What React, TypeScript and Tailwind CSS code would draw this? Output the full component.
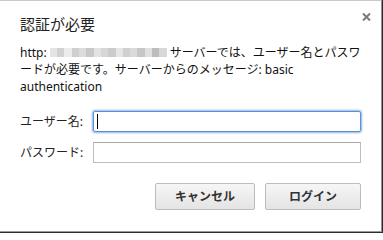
import React from "react";

const font = { fontFamily: '"Noto Sans", "Noto Sans CJK JP", sans-serif' };

function Blur() {
  const blocks = [
    "#e4e4e4", "#d2d2d2", "#ececec", "#cfcfcf", "#dcdcdc", "#c8c8c8", "#e2e2e2", "#d6d6d6",
    "#cbcbcb", "#e6e6e6", "#d0d0d0", "#dadada", "#c6c6c6", "#e0e0e0", "#bdbdbd", "#d8d8d8",
  ];
  return (
    <span className="inline-flex h-[9px] w-[117px] align-middle mx-[3px] relative top-[-1px]">
      {blocks.map((c, i) => (
        <span key={i} className="flex-1 h-full" style={{ background: c }} />
      ))}
    </span>
  );
}

export default function App() {
  return (
    <div className="w-[383px] h-[233px] bg-[#2b2b30] overflow-hidden" style={font}>
      <div className="w-[382px] h-[232px] bg-white border-t border-t-[#c9c9c9] border-r border-r-[#8f8f8f] border-b border-b-[#9a9a9a] relative text-[#222]">
        <button className="absolute right-[10px] top-[11px] w-[10px] h-[9px] flex items-center justify-center">
          <svg width="9" height="8" viewBox="0 0 9 8">
            <path d="M1 0.5 L8 7.5 M8 0.5 L1 7.5" stroke="#7a7a7a" strokeWidth="2" />
          </svg>
        </button>
        <div className="pl-[20px] pr-[20px] pt-[13px]">
          <div className="text-[15px] leading-[20px] text-[#222]">認証が必要</div>
          <div className="mt-[10px] text-[12px] leading-[17px] text-[#111]">
            <div className="whitespace-nowrap">
              http:
              <Blur />
              サーバーでは、ユーザー名とパスワ
            </div>
            <div className="whitespace-nowrap">ードが必要です。サーバーからのメッセージ: basic</div>
            <div className="whitespace-nowrap">authentication</div>
          </div>
          <div className="mt-[16px] flex flex-col gap-[10px] text-[12px]">
            <div className="flex items-center">
              <span className="w-[73px] text-[#222]">ユーザー名:</span>
              <div className="w-[269px] h-[21px] border border-[#5b90d2] rounded-[2px] shadow-[0_0_2px_1px_#8db4e4] relative">
                <span className="absolute left-[3px] top-[2px] w-px h-[15px] bg-black" />
              </div>
            </div>
            <div className="flex items-center">
              <span className="w-[73px] text-[#222]">パスワード:</span>
              <div className="w-[269px] h-[21px] border border-[#bdbdbd] border-t-[#a9a9a9]" />
            </div>
          </div>
          <div className="mt-[20px] flex justify-end gap-[10px]">
            <button className="w-[100px] h-[27px] rounded-[2px] border border-[#bcbcbc] bg-gradient-to-b from-[#f6f6f6] to-[#e4e4e4] text-[12px] font-bold text-[#333]">
              キャンセル
            </button>
            <button className="w-[96px] h-[27px] rounded-[2px] border border-[#bcbcbc] bg-gradient-to-b from-[#f6f6f6] to-[#e4e4e4] text-[12px] font-bold text-[#333]">
              ログイン
            </button>
          </div>
        </div>
      </div>
    </div>
  );
}
